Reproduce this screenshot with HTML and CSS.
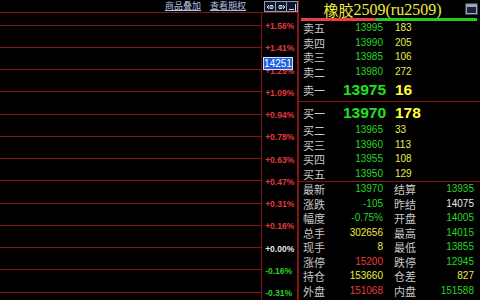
FILE: index.html
```html
<!DOCTYPE html>
<html lang="zh">
<head>
<meta charset="utf-8">
<title>橡胶2509</title>
<link rel="stylesheet" href="styles.css">
</head>
<body>
<div class="screen">
  <div class="left">
    <div class="head">
      <div class="links"><a href="#">商品叠加</a><a href="#">查看期权</a></div>
      <div class="btns">
        <span class="btn"><svg width="9" height="8" viewBox="0 0 9 8"><path d="M1 4h7M1 4l2-2M1 4l2 2M4 2.5h3M4 5.5h3" stroke="#c8d4ec" stroke-width="1" fill="none"/></svg></span>
        <span class="btn"><svg width="9" height="8" viewBox="0 0 9 8"><path d="M1 4h7M8 4l-2-2M8 4l-2 2M2 2.5h3M2 5.5h3" stroke="#c8d4ec" stroke-width="1" fill="none"/></svg></span>
        <span class="btn"><svg width="9" height="8" viewBox="0 0 9 8"><path d="M1 6.5h5M7.5 1v7" stroke="#c8d4ec" stroke-width="1" fill="none"/></svg></span>
      </div>
    </div>
    <div class="chart">
      <div class="plot">
        <div class="gl"></div><div class="gl"></div><div class="gl"></div><div class="gl"></div>
        <div class="gl"></div><div class="gl"></div><div class="gl"></div><div class="gl"></div>
        <div class="gl"></div><div class="gl"></div><div class="gl"></div><div class="gl"></div>
        <div class="gl"></div>
      </div>
      <div class="axis">
        <div class="tick up">+1.56%</div>
        <div class="tick up">+1.41%</div>
        <div class="tick up">+1.25%</div>
        <div class="tick up">+1.09%</div>
        <div class="tick up">+0.94%</div>
        <div class="tick up">+0.78%</div>
        <div class="tick up">+0.63%</div>
        <div class="tick up">+0.47%</div>
        <div class="tick up">+0.31%</div>
        <div class="tick up">+0.16%</div>
        <div class="tick flat">+0.00%</div>
        <div class="tick down">-0.16%</div>
        <div class="tick down">-0.31%</div>
      </div>
      <div class="price-tag">14251</div>
    </div>
  </div>

  <div class="quote">
    <div class="title">
      <h1><span class="cjk">橡胶</span>2509(ru2509)</h1>
      <span class="win-icon"></span>
    </div>
    <div class="bar"><span class="bar-red"></span><span class="bar-green"></span></div>

    <div class="row"><span class="lbl">卖五</span><span class="num g">13995</span><span></span><span class="vol">183</span></div>
    <div class="row"><span class="lbl">卖四</span><span class="num g">13990</span><span></span><span class="vol">205</span></div>
    <div class="row"><span class="lbl">卖三</span><span class="num g">13985</span><span></span><span class="vol">106</span></div>
    <div class="row"><span class="lbl">卖二</span><span class="num g">13980</span><span></span><span class="vol">272</span></div>
    <div class="row big ask1"><span class="lbl">卖一</span><span class="num g">13975</span><span></span><span class="vol">16</span></div>
    <div class="row big bid1"><span class="lbl">买一</span><span class="num g">13970</span><span></span><span class="vol">178</span></div>
    <div class="row"><span class="lbl">买二</span><span class="num g">13965</span><span></span><span class="vol">33</span></div>
    <div class="row"><span class="lbl">买三</span><span class="num g">13960</span><span></span><span class="vol">113</span></div>
    <div class="row"><span class="lbl">买四</span><span class="num g">13955</span><span></span><span class="vol">108</span></div>
    <div class="row"><span class="lbl">买五</span><span class="num g">13950</span><span></span><span class="vol">129</span></div>

    <div class="stats">
      <div class="srow"><span class="lbl">最新</span><span class="num g">13970</span><span></span><span class="lbl">结算</span><span class="num g">13935</span></div>
      <div class="srow"><span class="lbl">涨跌</span><span class="num g">-105</span><span></span><span class="lbl">昨结</span><span class="num w">14075</span></div>
      <div class="srow"><span class="lbl">幅度</span><span class="num g">-0.75%</span><span></span><span class="lbl">开盘</span><span class="num g">14005</span></div>
      <div class="srow"><span class="lbl">总手</span><span class="num y">302656</span><span></span><span class="lbl">最高</span><span class="num g">14015</span></div>
      <div class="srow"><span class="lbl">现手</span><span class="num y">8</span><span></span><span class="lbl">最低</span><span class="num g">13855</span></div>
      <div class="srow"><span class="lbl">涨停</span><span class="num r">15200</span><span></span><span class="lbl">跌停</span><span class="num g">12945</span></div>
      <div class="srow"><span class="lbl">持仓</span><span class="num y">153660</span><span></span><span class="lbl">仓差</span><span class="num y">827</span></div>
      <div class="srow"><span class="lbl">外盘</span><span class="num r">151068</span><span></span><span class="lbl">内盘</span><span class="num g">151588</span></div>
    </div>
  </div>
</div>
</body>
</html>
```

FILE: styles.css
```css
:root {
  --line: #861414;
  --green: #26d626;
  --yellow: #ecec44;
  --red: #e43c3c;
  --label: #c8c8c8;
}

html, body {
  margin: 0;
  padding: 0;
  background: #000;
}

.screen {
  width: 480px;
  height: 300px;
  overflow: hidden;
  display: flex;
  background: #000;
  font-family: "Liberation Sans", Arial, sans-serif;
}

/* ---------- left chart ---------- */
.left {
  width: 298px;
  display: flex;
  flex-direction: column;
}

.head {
  height: 13px;
  border-bottom: 1px solid var(--line);
  display: flex;
}

.links {
  width: 262px;
  display: flex;
  justify-content: flex-end;
  align-items: center;
  gap: 9px;
  padding-right: 16px;
  box-sizing: border-box;
}

.links a {
  font-family: "Noto Sans CJK SC", sans-serif;
  font-size: 9px;
  line-height: 10px;
  color: #b0c2e6;
  text-decoration: underline;
}

.btns {
  display: flex;
  padding: 1px 0 0 2px;
}

.btn {
  width: 10px;
  height: 9px;
  border: 1px solid #8b9bbb;
  background: #101828;
  display: flex;
  align-items: center;
  justify-content: center;
  margin-right: -1px;
}

.chart {
  flex: 1;
  display: flex;
  position: relative;
}

.plot {
  width: 262px;
  border-right: 1px solid var(--line);
  padding-top: 0.875px;
  display: flex;
  flex-direction: column;
}

.gl {
  height: 22.25px;
  flex: none;
  display: flex;
  align-items: center;
}

.gl::before {
  content: "";
  display: block;
  width: 100%;
  height: 1px;
  background: var(--line);
}

.axis {
  width: 35px;
  border-right: 1px solid var(--line);
  padding-top: 0.875px;
  display: flex;
  flex-direction: column;
}

.tick {
  height: 22.25px;
  flex: none;
  display: flex;
  align-items: center;
  padding: 2px 0 0 3px;
  box-sizing: border-box;
  font-size: 8.5px;
  font-weight: bold;
  line-height: 10px;
}

.tick.up { color: #e33a3a; }
.tick.flat { color: #e6e6e6; }
.tick.down { color: #2bd02b; }

.price-tag {
  position: absolute;
  left: 263px;
  top: 44px;
  width: 28px;
  height: 11px;
  border: 1px solid #cfe0ff;
  background: #1f5fe0;
  color: #fff;
  font-size: 10px;
  line-height: 11px;
  text-align: center;
}

/* ---------- right quote panel ---------- */
.quote {
  width: 181px;
  border-left: 1px solid var(--line);
  display: flex;
  flex-direction: column;
}

.title {
  height: 18px;
  display: flex;
  align-items: center;
  flex: none;
}

.title h1 {
  flex: 1;
  margin: 0;
  padding-top: 1px;
  text-align: center;
  font-family: "Liberation Serif", "Noto Sans CJK SC", serif;
  font-weight: normal;
  font-size: 16px;
  line-height: 17px;
  color: #f0ec3c;
  white-space: nowrap;
}

.title .cjk {
  display: inline-block;
  vertical-align: top;
  height: 16px;
  margin-top: 1px;
  font-family: "Noto Sans CJK SC", sans-serif;
  font-size: 15px;
  line-height: 16px;
}

.win-icon {
  width: 9px;
  height: 8px;
  border: 1px solid #9aa6c0;
  margin-right: 3px;
  background: linear-gradient(#9aa6c0 0 2px, #1a2234 2px);
  outline: 1px solid #3a4458;
}

.bar {
  height: 3px;
  margin: 0 3px 0 2px;
  display: flex;
  flex: none;
}

.bar-red { flex: 75; background: #ec3e3e; }
.bar-green { flex: 102; background: #22cc22; }

.row {
  height: 14.5px;
  flex: none;
  display: grid;
  grid-template-columns: 40px 40px 12px 1fr;
  align-items: center;
  padding-left: 4px;
}

.row.big.ask1 { height: 22px; }
.row.big.bid1 {
  height: 21px;
  border-top: 1px solid var(--line);
}

.lbl {
  font-family: "Noto Sans CJK SC", sans-serif;
  font-size: 11px;
  line-height: 12px;
  color: var(--label);
}

.num {
  text-align: right;
  font-size: 10px;
  line-height: 12px;
  white-space: nowrap;
}

.vol {
  font-size: 10px;
  line-height: 12px;
  color: var(--yellow);
}

.big .num,
.big .vol {
  font-size: 15.5px;
  line-height: 18px;
  font-weight: bold;
}

.big .num { color: #22e022; }
.big .vol { color: #ffff33; }

.g { color: var(--green); }
.y { color: var(--yellow); }
.r { color: var(--red); }
.w { color: #e8e8e8; }

.stats {
  border-top: 1px solid var(--line);
  display: flex;
  flex-direction: column;
}

.srow {
  height: 14.5px;
  flex: none;
  display: grid;
  grid-template-columns: 40px 40px 11px 40px 40px;
  align-items: center;
  padding-left: 4px;
}
```
